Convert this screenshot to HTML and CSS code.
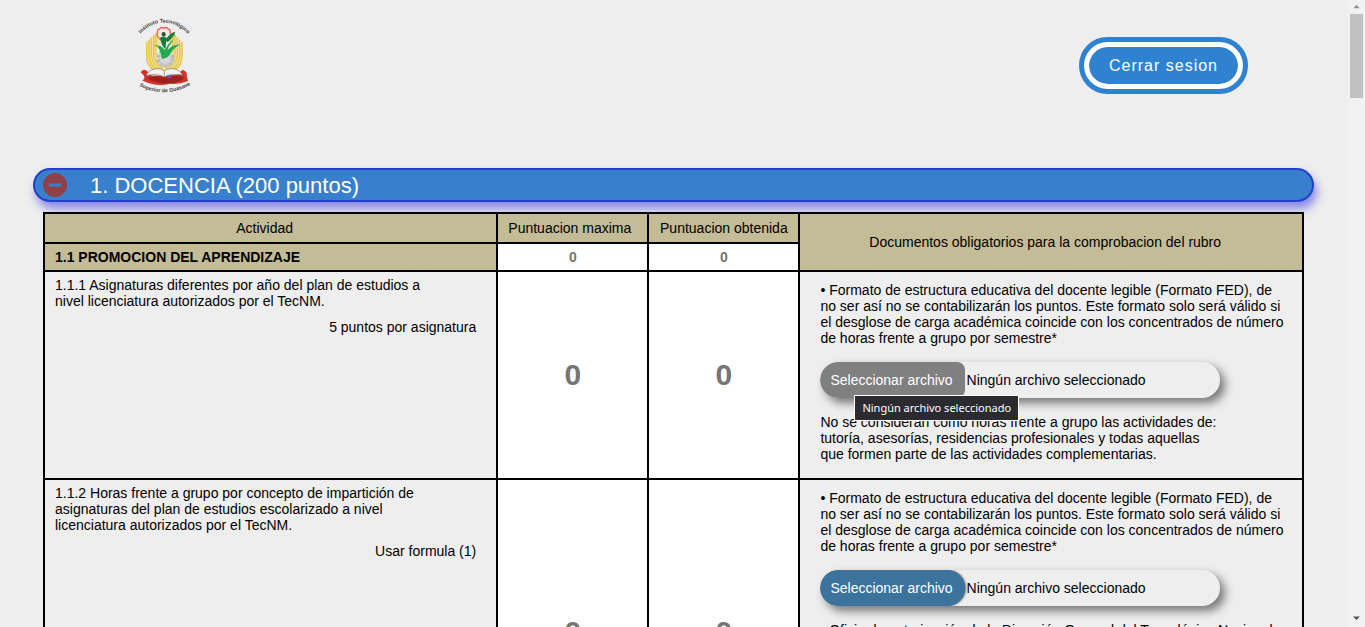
FILE: index.html
```html
<!DOCTYPE html>
<html lang="es">
<head>
<meta charset="utf-8">
<title>Docencia</title>
<link rel="stylesheet" href="styles.css">
</head>
<body>
<div class="page">
  <header class="header">
    <svg class="logo" viewBox="54 36 156 234" role="img" aria-label="Instituto Tecnológico Superior de Guasave">
      <defs>
        <path id="arc-top" d="M62 86Q92 53 131 53Q174 53 212 96"/>
        <path id="arc-bottom" d="M58 243Q130 282 212 240"/>
      </defs>
      <path fill="#f0e2a0" d="M78 114L110 80H156L188 114V160Q186 200 133 202Q80 200 78 160Z"/>
      <g fill="none" stroke="#e6c640" stroke-width="4">
        <path d="M80 112V150Q80 196 124 200"/>
        <path d="M87 104V150Q88 190 126 196"/>
        <path d="M94 97V150Q96 184 128 190"/>
        <path d="M101 90V150Q103 178 130 184"/>
        <path d="M108 83V150"/>
        <path d="M186 112V150Q186 196 142 200"/>
        <path d="M179 104V150Q178 190 140 196"/>
        <path d="M172 97V150Q170 184 138 190"/>
        <path d="M165 90V150Q163 178 136 184"/>
        <path d="M158 83V150"/>
      </g>
      <path fill="#eeeeee" d="M110 128L124 110H146L158 128V150H110Z"/>
      <circle cx="136" cy="160" r="22" fill="#d6d6d8" stroke="#bcbcc2" stroke-width="11" stroke-dasharray="10 4"/>
      <g fill="none" stroke="#e4636d" stroke-width="4">
        <path fill="#f7e6e4" d="M131 70Q138 64 144 72Q154 74 150 84Q156 94 146 98Q138 108 131 100Q122 108 116 98Q108 92 113 83Q110 74 119 72Q124 64 131 70Z"/>
      </g>
      <ellipse cx="131" cy="88" rx="6" ry="7" fill="#1d5a3a"/>
      <path fill="#26a94e" d="M125 162Q124 132 104 118V122Q126 118 134 136Q142 118 162 100Q160 84 164 82Q164 104 152 116Q144 126 142 136Q154 120 180 118Q162 128 152 144Q146 160 125 162Z"/>
      <path fill="#1c7a3e" d="M120 98Q128 92 140 98L136 132Q124 122 120 98ZM138 104Q148 84 166 80Q160 98 142 112Z"/>
      <path fill="#d2322c" d="M62 202Q68 190 78 196L96 212L170 210L188 194Q204 200 200 212L204 228Q176 240 150 236Q108 248 66 226Q76 222 72 212Z"/>
      <path fill="#9e2020" d="M80 220Q108 208 140 218Q166 208 192 216L186 226Q150 240 120 234Q100 232 80 220Z"/>
      <path fill="#f5f2ee" stroke="#77716e" stroke-width="2" d="M78 212Q86 194 104 192Q122 188 133 198Q146 188 166 192Q180 196 188 210Q152 204 133 216Q110 204 78 212Z"/>
      <path fill="none" stroke="#77716e" stroke-width="2" d="M133 198V216"/>
      <circle cx="149" cy="215" r="5" fill="#4965b5"/>
      <text class="logo-text"><textPath href="#arc-top">Instituto Tecnológico</textPath></text>
      <text class="logo-text"><textPath href="#arc-bottom">Superior de Guasave</textPath></text>
    </svg>
    <button class="logout" type="button">Cerrar sesion</button>
  </header>

  <main class="content">
    <button class="section-bar" type="button" aria-expanded="true">
      <svg class="minus" viewBox="0 0 24 24" aria-hidden="true"><path fill="#8f4048" fill-rule="evenodd" d="M12 0a12 12 0 1 0 0 24a12 12 0 0 0 0-24ZM6 10.500h12v3H6Z"/></svg>
      <span class="section-title">1. DOCENCIA (200 puntos)</span>
    </button>

    <div class="table-wrap">
    <table class="rubric">
      <colgroup><col class="col-activity"><col class="col-points"><col class="col-points"><col class="col-docs"></colgroup>
      <thead>
        <tr class="head-row">
          <th class="head-wide">Actividad</th>
          <th class="head-max">Puntuacion maxima</th>
          <th>Puntuacion obtenida</th>
          <th class="head-wide" rowspan="2">Documentos obligatorios para la comprobacion del rubro</th>
        </tr>
        <tr class="sub-row">
          <th class="group">1.1 PROMOCION DEL APRENDIZAJE</th>
          <td class="points"><input class="score" type="text" placeholder="0" aria-label="Puntuacion maxima 1.1"></td>
          <td class="points"><input class="score" type="text" placeholder="0" aria-label="Puntuacion obtenida 1.1"></td>
        </tr>
      </thead>
      <tbody>
        <tr>
          <td class="activity">
            <p class="desc">1.1.1 Asignaturas diferentes por año del plan de estudios a nivel licenciatura autorizados por el TecNM.</p>
            <p class="rule">5 puntos por asignatura</p>
          </td>
          <td class="points"><input class="score score-large" type="text" placeholder="0" aria-label="Puntuacion maxima 1.1.1"></td>
          <td class="points"><input class="score score-large" type="text" placeholder="0" aria-label="Puntuacion obtenida 1.1.1"></td>
          <td class="docs">
            <p>• Formato de estructura educativa del docente legible (Formato FED), de no ser así no se contabilizarán los puntos. Este formato solo será válido si el desglose de carga académica coincide con los concentrados de número de horas frente a grupo por semestre*</p>
            <div class="file is-hover">
              <input class="file-input" type="file" id="file-111">
              <label class="file-label" for="file-111"><span class="file-button">Seleccionar archivo</span><span>Ningún archivo seleccionado</span></label>
              <span class="tooltip" role="tooltip">Ningún archivo seleccionado</span>
            </div>
            <p class="note">No se consideran como horas frente a grupo las actividades de: tutoría, asesorías, residencias profesionales y todas aquellas que formen parte de las actividades complementarias.</p>
          </td>
        </tr>
        <tr class="row-tall">
          <td class="activity">
            <p class="desc">1.1.2 Horas frente a grupo por concepto de impartición de asignaturas del plan de estudios escolarizado a nivel licenciatura autorizados por el TecNM.</p>
            <p class="rule">Usar formula (1)</p>
          </td>
          <td class="points"><input class="score score-large" type="text" placeholder="0" aria-label="Puntuacion maxima 1.1.2"></td>
          <td class="points"><input class="score score-large" type="text" placeholder="0" aria-label="Puntuacion obtenida 1.1.2"></td>
          <td class="docs">
            <p>• Formato de estructura educativa del docente legible (Formato FED), de no ser así no se contabilizarán los puntos. Este formato solo será válido si el desglose de carga académica coincide con los concentrados de número de horas frente a grupo por semestre*</p>
            <div class="file">
              <input class="file-input" type="file" id="file-112">
              <label class="file-label" for="file-112"><span class="file-button">Seleccionar archivo</span><span>Ningún archivo seleccionado</span></label>
            </div>
            <p>• Oficio de autorización de la Dirección General del Tecnológico Nacional</p>
          </td>
        </tr>
      </tbody>
    </table>
    </div>
  </main>
</div>
<div class="scrollbar" aria-hidden="true">
  <svg class="arrow" viewBox="0 0 16 16"><path fill="#8a8a8a" d="M4.500 9.500h7L8 5.500Z"/></svg>
  <div class="track"><div class="thumb"></div></div>
  <svg class="arrow" viewBox="0 0 16 16"><path fill="#505050" d="M4 4h8L8 8Z"/></svg>
</div>
</body>
</html>
```
FILE: styles.css
```css
* { box-sizing: border-box; }

body {
  margin: 0;
  height: 100vh;
  display: flex;
  overflow: hidden;
  background: #eeeeee;
  color: #000;
  font: 14px/16px "Liberation Sans", Arial, sans-serif;
}

.page { flex: 1; min-width: 0; height: 100vh; overflow: hidden; }

.header {
  display: flex;
  justify-content: space-between;
  align-items: flex-start;
  padding: 17px 100px 0 138px;
  height: 168px;
}
.logo { width: 52px; height: 78px; overflow: visible; }
.logo-text { font: bold 16px "Liberation Sans", Arial, sans-serif; fill: #3c3c40; }

.logout {
  margin: 25px 5px 0 0;
  padding: 9px 20px;
  border: 5px solid #fff;
  outline: 5px solid #2e82d0;
  border-radius: 30px;
  background: #2e82d0;
  background-clip: padding-box;
  color: #fff;
  font: 16px/19px "Liberation Sans", Arial, sans-serif;
  letter-spacing: 1px;
}

.content { padding: 0 34px 0 33px; }

.section-bar {
  display: flex;
  align-items: center;
  gap: 23px;
  width: 100%;
  height: 34px;
  padding: 0 8px;
  border: 2px solid #2340cc;
  border-radius: 17px;
  background: #3880cb;
  box-shadow: 3px 7px 10px rgba(70, 70, 225, .6);
  color: #fff;
  font: 22px/26px "Liberation Sans", Arial, sans-serif;
  text-align: left;
}
.section-title { padding-top: 2px; }
.minus { width: 24px; height: 24px; }

.table-wrap { position: relative; padding: 10px 10px 0; }
.rubric { width: 100%; table-layout: fixed; border-collapse: collapse; background: #eeeeee; }
.rubric th, .rubric td { border: 2px solid #000; padding: 0; }
.rubric th { background: #c4bc96; font-weight: normal; }
.col-activity { width: 36%; }
.col-points { width: 12%; }
.col-docs { width: 40%; }
.head-row { height: 30px; }
.rubric .head-row th { padding-bottom: 1px; }
.rubric .head-wide { padding-right: 12px; }
.rubric .head-max { padding-right: 6px; }
.sub-row { height: 28px; }
.row-tall { height: 306px; }
.rubric .group { padding: 0 10px; text-align: left; font-weight: bold; }

.rubric .points { background: #fff; }
.score {
  display: block;
  width: 100%;
  padding: 0;
  border: 0;
  background: transparent;
  font: bold 14px/16px "Liberation Sans", Arial, sans-serif;
  text-align: center;
}
.score::placeholder { color: #757575; }
.score-large { font-size: 30px; line-height: 34px; }

.rubric .activity { padding: 5px 20px 5px 10px; vertical-align: top; }
.rubric .docs { padding: 10px 15px 0 20px; vertical-align: top; }
p { margin: 0; }
.desc { max-width: 380px; }
.rule { margin-top: 10px; text-align: right; }
.docs p { margin-bottom: 16px; }
.note { max-width: 400px; }

.file {
  position: relative;
  width: 400px;
  max-width: 100%;
  margin-bottom: 16px;
  border-radius: 18px;
  box-shadow: 5px 5px 10px rgba(0, 0, 0, .5);
  background: #eeeeee;
}
.file-input { position: absolute; width: 100%; height: 100%; margin: 0; opacity: 0; }
.file-label { display: flex; align-items: center; gap: 2px; border-radius: 18px; overflow: hidden; }
.file-button {
  padding: 10px 12px 10px 10px;
  border-radius: 18px;
  background: #3b739d;
  box-shadow: 1px 0 2px rgba(0, 0, 0, .6);
  color: #fff;
}
.is-hover .file-button { border-radius: 18px 8px 8px 18px; background: #808080; box-shadow: none; }

.tooltip {
  position: absolute;
  top: 33px;
  left: 34px;
  padding: 4px 7px;
  border: 1px solid #fff;
  background: #2b2b2f;
  color: #fff;
  font: 11px/16px "Noto Sans", "Open Sans", sans-serif;
  white-space: nowrap;
}

.scrollbar { display: flex; flex-direction: column; width: 17px; background: #f1f1f1; }
.arrow { width: 17px; height: 14px; }
.track { flex: 1; padding: 0 2px; }
.thumb { height: 14%; background: #c1c1c1; }
```
